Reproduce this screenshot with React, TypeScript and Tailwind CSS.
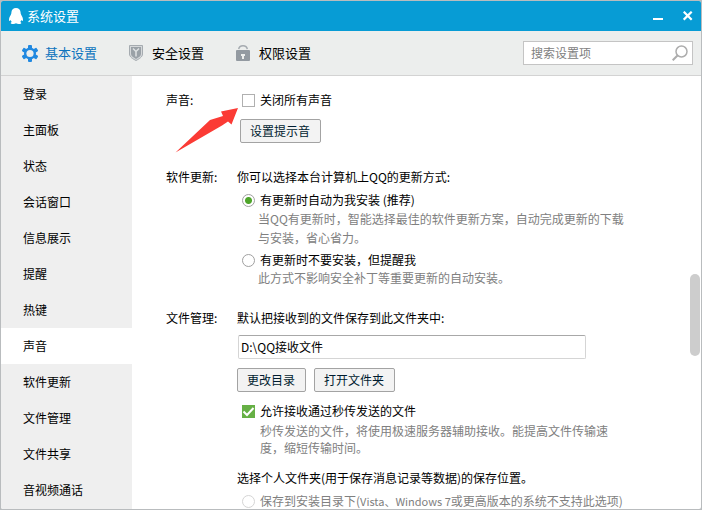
import React, { useState } from "react";

const SIDE_ITEMS = [
  "登录",
  "主面板",
  "状态",
  "会话窗口",
  "信息展示",
  "提醒",
  "热键",
  "声音",
  "软件更新",
  "文件管理",
  "文件共享",
  "音视频通话",
];

function PenguinIcon() {
  return (
    <svg viewBox="0 0 14 16" className="h-4 w-3.5" fill="#fff" aria-hidden="true">
      <path d="M7 0C4.300 0 2.400 1.800 2.400 4.600c0 1-.2 1.700-.7 2.500C.8 8.600 0 10.300 0 11.700c0 .9.300 1.300.7 1.200.4-.1.600-.4.900-.8.200.7.600 1.400 1.200 1.900-.8.300-1.100.6-1.100 1 0 .7 1 1 2.500 1 1.200 0 2.200-.3 2.800-.7.600.4 1.600.7 2.800.7 1.500 0 2.500-.3 2.500-1 0-.4-.3-.7-1.100-1 .6-.5 1-1.200 1.200-1.900.3.400.5.700.9.800.4.100.7-.3.700-1.200 0-1.400-.8-3.100-1.700-4.600-.5-.8-.7-1.500-.7-2.500C11.600 1.800 9.700 0 7 0z" />
    </svg>
  );
}

function GearIcon() {
  return (
    <svg viewBox="-1 0 16 17" className="h-[17px] w-4 overflow-visible" aria-hidden="true">
      <g fill="#2189e0">
        <rect x="6" y="0" width="4" height="17" rx="1" />
        <rect x="6" y="0" width="4" height="17" rx="1" transform="rotate(60 8 8.500)" />
        <rect x="6" y="0" width="4" height="17" rx="1" transform="rotate(120 8 8.500)" />
        <circle cx="8" cy="8.500" r="6" />
      </g>
      <circle cx="8" cy="8.500" r="3.600" fill="#eceeed" />
    </svg>
  );
}

function ShieldIcon() {
  return (
    <svg viewBox="-1 0 16 16" className="size-4" aria-hidden="true">
      <path d="M.5.500h13V9c0 3-3.500 5-6.500 6.500C4 14 .5 12 .5 9z" fill="#d5d8da" stroke="#a5abb0" />
      <path d="M2 2h10v7c0 2-2.500 3.600-5 4.900C4.500 12.600 2 11 2 9z" fill="#9aa1a7" />
      <path d="M4 3.500l3 3 3-3M7 6.500v5" fill="none" stroke="#dfe2e3" strokeWidth="1.500" />
    </svg>
  );
}

function LockIcon() {
  return (
    <svg viewBox="-1 0 16 16" className="size-4" aria-hidden="true">
      <path d="M2.700 4.200C3 2 4.700.7 7 .7s4 1.300 4.300 3.500" fill="none" stroke="#a5abb0" strokeWidth="1.400" />
      <rect x="0" y="5" width="14" height="11" rx="1" fill="#939aa1" />
      <path d="M5 9h4v2H8v3H6v-3H5z" fill="#eceeed" />
    </svg>
  );
}

function TopTab({ icon, label, active }: { icon: React.ReactNode; label: string; active?: boolean }) {
  return (
    <button type="button" className={"flex items-center gap-2 text-[13px] leading-5 " + (active ? "text-[#0b73bd]" : "text-black")}>
      {icon}
      {label}
    </button>
  );
}

function PushButton({ children }: { children: React.ReactNode }) {
  return (
    <button type="button" className="h-6 rounded-xs border border-[#a3a3a3] bg-[#f3f3f3] pr-2.5 pl-[9px] leading-5 text-[#001c30]">
      {children}
    </button>
  );
}

const RADIO =
  "size-[13px] shrink-0 appearance-none rounded-full border border-[#a0a0a0] bg-white checked:bg-[radial-gradient(circle,#4ea52a_3px,#fff_4px)] disabled:border-[#d5d5d5]";

function Tick({ id, checked, onChange }: { id: string; checked: boolean; onChange: () => void }) {
  return (
    <span className="relative flex size-[13px] shrink-0">
      <input
        id={id}
        type="checkbox"
        checked={checked}
        onChange={onChange}
        className="size-[13px] appearance-none border border-[#b0b0b0] bg-white checked:border-[#66b045] checked:bg-[#66b045]"
      />
      {checked && (
        <svg viewBox="0 0 13 13" className="pointer-events-none absolute inset-0 size-[13px]" aria-hidden="true">
          <path d="M1.500 6.500l3.500 3.500L11.500 3" fill="none" stroke="#fff" strokeWidth="2" />
        </svg>
      )}
    </span>
  );
}

export default function App() {
  const [section, setSection] = useState("声音");
  const [mute, setMute] = useState(false);
  const [fast, setFast] = useState(true);
  const [update, setUpdate] = useState("auto");
  const [path, setPath] = useState("D:\\QQ接收文件");

  return (
    <div className="h-screen overflow-hidden bg-[#b9bcbe] p-px font-['Noto_Sans_CJK_SC',sans-serif] text-xs text-black">
      <div className="flex h-full flex-col overflow-hidden rounded-xs bg-white">
        <header className="flex h-[30px] shrink-0 items-center bg-[#079cd5] px-2 text-white">
          <PenguinIcon />
          <h1 className="ml-1 grow text-[13px] leading-5">系统设置</h1>
          <button type="button" aria-label="最小化" className="mr-5 flex h-4 w-2.5 items-center">
            <svg viewBox="0 0 10 16" className="h-4 w-2.5" aria-hidden="true">
              <path d="M0 11h10" stroke="#fff" strokeWidth="2" />
            </svg>
          </button>
          <button type="button" aria-label="关闭" className="flex size-2.5">
            <svg viewBox="0 0 10 10" className="size-2.5" aria-hidden="true">
              <path d="M.7.700l8 8M8.700.700l-8 8" stroke="#fff" strokeWidth="2.200" />
            </svg>
          </button>
        </header>

        <nav className="flex h-[45px] shrink-0 items-center gap-[31px] border-b border-[#d3d3d3] bg-[#eceeed] pr-2 pl-5">
          <TopTab icon={<GearIcon />} label="基本设置" active />
          <TopTab icon={<ShieldIcon />} label="安全设置" />
          <TopTab icon={<LockIcon />} label="权限设置" />
          <div className="ml-auto flex h-6 w-[170px] items-center border border-[#c4c4c4] bg-white pr-1 pl-[7px]">
            <input type="search" aria-label="搜索设置项" placeholder="搜索设置项" className="min-w-0 grow bg-transparent leading-5 outline-none placeholder:text-[#808080]" />
            <svg viewBox="0 0 16 16" className="size-4 shrink-0" fill="none" stroke="#adadad" aria-hidden="true">
              <circle cx="9.500" cy="6.500" r="5.500" strokeWidth="1.500" />
              <path d="M5.500 10.500L.7 15.300" strokeWidth="2" />
            </svg>
          </div>
        </nav>

        <div className="flex min-h-0 grow">
          <aside className="w-[131px] shrink-0 bg-[#efefef]">
            {SIDE_ITEMS.map((item) => (
              <button
                key={item}
                type="button"
                onClick={() => setSection(item)}
                className={"block h-9 w-full pl-[22px] text-left leading-5 " + (item === section ? "bg-white" : "")}
              >
                {item}
              </button>
            ))}
          </aside>

          <main className="relative flex min-w-0 grow flex-col overflow-hidden pt-3.5 pl-[34px] leading-5">
            <svg viewBox="0 0 64 46" className="pointer-events-none absolute top-[31px] left-[43px] h-[46px] w-16" aria-hidden="true">
              <path d="M.5 45.500L35 13 48 9 46 4.500 63 1 56.500 17.500 53 14.500 47 18.500z" fill="#fb3b35" />
            </svg>

            <section className="flex">
              <h2 className="w-[71px] shrink-0">声音:</h2>
              <div className="flex flex-col items-start gap-[9px] pl-[3px]">
                <label htmlFor="mute" className="flex items-center gap-[5px] pl-0.5">
                  <Tick id="mute" checked={mute} onChange={() => setMute(!mute)} />
                  关闭所有声音
                </label>
                <PushButton>设置提示音</PushButton>
              </div>
            </section>

            <section className="mt-6 flex">
              <h2 className="w-[71px] shrink-0">软件更新:</h2>
              <div>
                <p>你可以选择本台计算机上QQ的更新方式:</p>
                <label className="mt-1 flex items-center gap-[5px] pl-[5px] leading-[18px]">
                  <input type="radio" name="update" checked={update === "auto"} onChange={() => setUpdate("auto")} className={RADIO} />
                  有更新时自动为我安装 (推荐)
                </label>
                <p className="w-[390px] pl-[21px] leading-[19px] text-[#808080]">
                  当QQ有更新时，智能选择最佳的软件更新方案，自动完成更新的下载与安装，省心省力。
                </p>
                <label className="mt-1 flex items-center gap-[5px] pl-[5px] leading-[18px]">
                  <input type="radio" name="update" checked={update === "ask"} onChange={() => setUpdate("ask")} className={RADIO} />
                  有更新时不要安装，但提醒我
                </label>
                <p className="pl-[21px] leading-[17px] text-[#808080]">此方式不影响安全补丁等重要更新的自动安装。</p>
              </div>
            </section>

            <section className="mt-[22px] flex">
              <h2 className="w-[71px] shrink-0">文件管理:</h2>
              <div>
                <label htmlFor="path" className="block">默认把接收到的文件保存到此文件夹中:</label>
                <input
                  id="path"
                  value={path}
                  onChange={(e) => setPath(e.target.value)}
                  className="mt-[7px] ml-px block h-6 w-[348px] rounded-xs border border-[#d5d5d5] border-t-[#a8a8a8] bg-white px-0.5 pb-0.5 leading-5 outline-none"
                />
                <div className="mt-[9px] flex gap-2">
                  <PushButton>更改目录</PushButton>
                  <PushButton>打开文件夹</PushButton>
                </div>
                <label htmlFor="fast" className="mt-[9px] flex items-center gap-[5px] pl-[5px]">
                  <Tick id="fast" checked={fast} onChange={() => setFast(!fast)} />
                  允许接收通过秒传发送的文件
                </label>
                <p className="mt-px w-[376px] pl-[23px] leading-[17px] text-[#808080]">
                  秒传发送的文件，将使用极速服务器辅助接收。能提高文件传输速度，缩短传输时间。
                </p>
                <p className="mt-3">选择个人文件夹(用于保存消息记录等数据)的保存位置。</p>
                <label className="mt-[3px] flex items-center gap-[5px] pl-[5px] whitespace-nowrap text-[#808080]">
                  <input type="radio" name="folder" disabled className={RADIO} />
                  <span>
                    保存到安装目录下(<span className="text-[11px]">Vista、Windows 7</span>或更高版本的系统不支持此选项)
                  </span>
                </label>
              </div>
            </section>

            <div className="absolute top-[198px] right-px h-[82px] w-2.5 rounded-full bg-[#cdcdcd]" />
          </main>
        </div>
      </div>
    </div>
  );
}
